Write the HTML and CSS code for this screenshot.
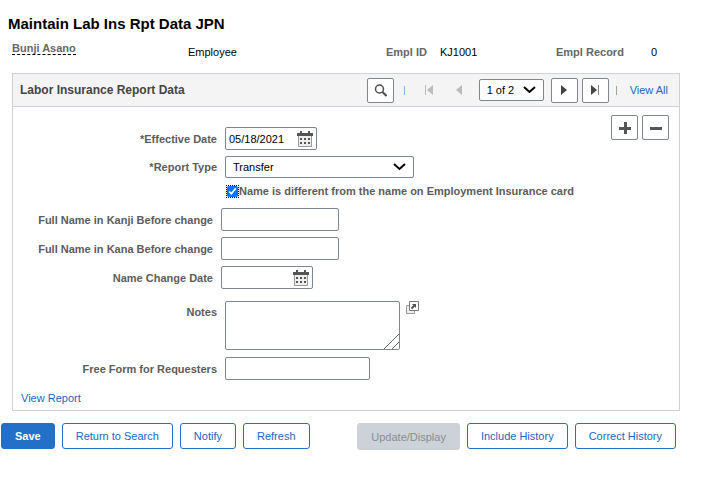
FILE: index.html
```html
<!DOCTYPE html>
<html lang="en">
<head>
<meta charset="utf-8">
<title>Maintain Lab Ins Rpt Data JPN</title>
<link rel="stylesheet" href="styles.css">
</head>
<body>
<svg class="defs" aria-hidden="true">
  <symbol id="calendar" viewBox="0 0 16 16">
    <path fill="#eee" stroke="#999" d="M1.500 3.500h13v12h-13z"/>
    <path fill="#555" d="M0 2h3V0h2v2h6V0h2v2h3v3H0z"/>
    <path fill="#555" d="M3 7h2v2H3zM7 7h2v2H7zM11 7h2v2h-2zM3 11h2v2H3zM7 11h2v2H7zM11 11h2v2h-2z"/>
  </symbol>
</svg>
<main>
  <h1>Maintain Lab Ins Rpt Data JPN</h1>
  <div class="person">
    <span class="name"><span>Bunji Asano</span></span>
    <span class="role">Employee</span>
    <span class="key">Empl ID</span>
    <span class="id">KJ1001</span>
    <span class="key record">Empl Record</span>
    <span>0</span>
  </div>

  <section class="panel">
    <header class="bar">
      <h2>Labor Insurance Report Data</h2>
      <nav class="pager">
        <button class="tool search" aria-label="Find"><svg width="13" height="13" viewBox="0 0 13 13"><circle cx="5.500" cy="5" r="4" fill="none" stroke="#4d4d4d" stroke-width="1.500"/><path d="M8.500 8l4 4" stroke="#4d4d4d" stroke-width="2"/></svg></button>
        <span class="divider first"></span>
        <button class="plain to-first" disabled aria-label="First"><svg width="8" height="10" viewBox="0 0 8 10"><path fill="#bbb" d="M0 0h1v10H0zM8 0v10L2 5z"/></svg></button>
        <button class="plain to-prev" disabled aria-label="Previous"><svg width="6" height="10" viewBox="0 0 6 10"><path fill="#bbb" d="M6 0v10L0 5z"/></svg></button>
        <span class="select page"><select aria-label="Page"><option>1 of 2</option></select><svg width="13" height="8" viewBox="0 0 13 8"><path d="M1 1l5.500 5L12 1" fill="none" stroke="#000" stroke-width="2"/></svg></span>
        <button class="tool next" aria-label="Next"><svg width="6" height="10" viewBox="0 0 6 10"><path fill="#444" d="M0 0v10l6-5z"/></svg></button>
        <button class="tool" aria-label="Last"><svg width="8" height="10" viewBox="0 0 8 10"><path fill="#444" d="M0 0v10l6-5z"/><path fill="#888" d="M7 0h1v10H7z"/></svg></button>
        <span class="divider last"></span>
        <a href="#">View All</a>
      </nav>
    </header>

    <div class="content">
      <form class="fields">
        <div class="row">
          <label for="date">*Effective Date</label>
          <span class="date"><input id="date" type="text" value="05/18/2021"><svg width="16" height="16"><use href="#calendar"/></svg></span>
        </div>
        <div class="row">
          <label for="type">*Report Type</label>
          <span class="select type"><select id="type"><option>Transfer</option></select><svg width="13" height="8" viewBox="0 0 13 8"><path d="M1 1l5.500 5L12 1" fill="none" stroke="#000" stroke-width="2"/></svg></span>
        </div>
        <div class="check">
          <input id="differs" type="checkbox" checked>
          <label for="differs">Name is different from the name on Employment Insurance card</label>
        </div>
        <div class="row inner">
          <label for="kanji">Full Name in Kanji Before change</label>
          <input id="kanji" class="text" type="text">
        </div>
        <div class="row inner">
          <label for="kana">Full Name in Kana Before change</label>
          <input id="kana" class="text" type="text">
        </div>
        <div class="row inner">
          <label for="changed">Name Change Date</label>
          <span class="date"><input id="changed" type="text"><svg width="16" height="16"><use href="#calendar"/></svg></span>
        </div>
        <div class="row notes">
          <label for="notes">Notes</label>
          <textarea id="notes"></textarea>
          <button class="plain" type="button" aria-label="Expand notes"><svg width="13" height="13" viewBox="0 0 13 13"><path fill="#eee" stroke="#999" d="M.5 4.500h8v8h-8z"/><path fill="#fff" stroke="#777" d="M3.500.5h9v9h-9z"/><path d="M5.500 7.500l3-3" stroke="#555" stroke-width="2"/><path fill="#555" d="M6 3h4v4z"/></svg></button>
        </div>
        <div class="row">
          <label for="free">Free Form for Requesters</label>
          <input id="free" class="text wide" type="text">
        </div>
      </form>
      <div class="edit">
        <button class="tool" aria-label="Add row"><svg width="12" height="12" viewBox="0 0 12 12"><path fill="#555" d="M5 0h3v5h4v3H8v4H5V8H0V5h5z"/></svg></button>
        <button class="tool" aria-label="Delete row"><svg width="12" height="12" viewBox="0 0 12 12"><path fill="#555" d="M0 5h12v3H0z"/></svg></button>
      </div>
    </div>
    <a class="report" href="#">View Report</a>
  </section>
</main>

<footer>
  <button class="btn save">Save</button>
  <button class="btn">Return to Search</button>
  <button class="btn">Notify</button>
  <button class="btn">Refresh</button>
  <button class="btn update" disabled>Update/Display</button>
  <button class="btn">Include History</button>
  <button class="btn">Correct History</button>
</footer>
</body>
</html>
```
FILE: styles.css
```css
* {
  box-sizing: border-box;
}

body {
  margin: 0;
  background: #fff;
  color: #000;
  font: 11px/14px "Liberation Sans", Arial, sans-serif;
}

button,
input,
select,
textarea {
  margin: 0;
  font: inherit;
  color: inherit;
}

svg {
  display: block;
  flex: none;
}

.defs {
  position: absolute;
  width: 0;
  height: 0;
}

a {
  color: #2265bf;
  text-decoration: none;
}

main {
  padding: 14px 34px 0 12px;
}

h1 {
  margin: 0 0 0 -4px;
  font-size: 15px;
  line-height: 20px;
}

.person {
  display: flex;
  align-items: center;
  height: 36px;
}

.name {
  width: 176px;
  padding-bottom: 8px;
  color: #666;
  font-weight: bold;
}

.name span {
  display: inline-block;
  border-bottom: 1px dashed #000;
  line-height: 12px;
}

.role {
  width: 198px;
}

.key {
  width: 54px;
  color: #666;
  font-weight: bold;
}

.id {
  width: 116px;
}

.record {
  width: 95px;
}

.panel {
  margin-top: 3px;
  padding-bottom: 5px;
  border: 1px solid #cdd1d9;
}

.bar {
  display: flex;
  align-items: center;
  justify-content: space-between;
  height: 33px;
  padding: 0 11px 0 7px;
  border-bottom: 1px solid #cdd1d9;
  background: #f4f4f4;
}

h2 {
  margin: 0;
  color: #444;
  font-size: 12px;
}

.pager {
  display: flex;
  align-items: center;
}

.tool {
  display: flex;
  align-items: center;
  justify-content: center;
  width: 27px;
  height: 25px;
  padding: 0;
  border: 1px solid #7e868f;
  border-radius: 2px;
  background: #fff;
}

.plain {
  padding: 0;
  border: 0;
  background: none;
}

.divider {
  width: 1px;
  height: 9px;
  background: #8cb1d6;
}

.divider.first {
  margin: 0 20px 0 10px;
}

.divider.last {
  margin: 0 13px 0 7px;
  background: #9aab96;
}

.to-first {
  margin-right: 23px;
}

.to-prev {
  margin-right: 17px;
}

.next {
  margin: 0 4px 0 7px;
}

.select {
  display: grid;
  align-items: center;
}

.select > * {
  grid-area: 1 / 1;
}

.select svg {
  justify-self: end;
  margin-right: 8px;
  pointer-events: none;
}

select {
  width: 100%;
  height: 22px;
  padding: 0 7px;
  border: 1px solid #7e868f;
  border-radius: 2px;
  background: #fff;
  appearance: none;
}

.page {
  width: 65px;
}

.type {
  width: 189px;
}

.content {
  display: flex;
  justify-content: space-between;
  padding: 8px 10px 0 0;
}

.fields {
  display: flex;
  flex-direction: column;
  gap: 6px;
  padding-top: 12px;
}

.row {
  display: flex;
  align-items: center;
}

.row label {
  width: 204px;
  margin-right: 8px;
  text-align: right;
}

.row.inner label {
  width: 200px;
}

label {
  color: #5c5c5c;
  font-weight: bold;
}

.date {
  display: flex;
  align-items: center;
  width: 92px;
}

.date,
.text,
textarea {
  height: 23px;
  padding: 0 3px;
  border: 1px solid #7e868f;
  border-radius: 2px;
  background: #fff;
}

.date input {
  flex: 1;
  min-width: 0;
  padding: 0;
  border: 0;
  background: none;
  outline: 0;
}

.text {
  width: 118px;
}

.text.wide {
  width: 145px;
}

.check {
  display: flex;
  align-items: center;
  margin: 0 0 4px 214px;
}

.check input {
  width: 11px;
  height: 11px;
  margin-right: 1px;
  outline: 1px dotted #000;
  accent-color: #0075ff;
}

.notes {
  align-items: flex-start;
  margin: 6px 0 1px;
}

.notes label {
  padding-top: 4px;
}

textarea {
  width: 175px;
  height: 49px;
  margin-right: 6px;
}

textarea::-webkit-resizer {
  background: linear-gradient(135deg, transparent 48%, #666 48% 52%, transparent 52% 74%, #666 74% 78%, transparent 78%);
}

.edit {
  display: flex;
  gap: 4px;
}

.report {
  display: inline-block;
  margin: 11px 0 0 8px;
}

footer {
  display: flex;
  gap: 7px;
  padding: 12px 38px 0 1px;
}

.btn {
  height: 26px;
  padding: 0 13px;
  border: 1px solid #2370c9;
  border-radius: 3px;
  background: #fff;
  color: #2265bf;
  white-space: nowrap;
}

.save {
  background: #2370c9;
  color: #fff;
  font-weight: bold;
}

.update {
  height: 27px;
  margin-left: auto;
  border-color: #cdd2d8;
  background: #cdd2d8;
  color: #888e94;
}
```
